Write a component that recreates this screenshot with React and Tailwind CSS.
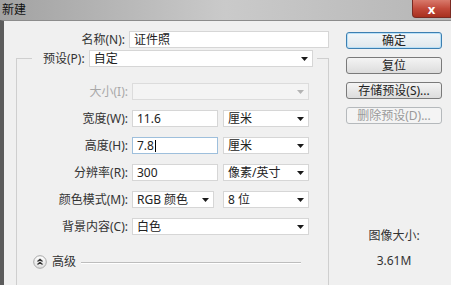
import React from 'react';

const Arrow = ({ color = '#1a1a1a' }) => (
  <svg width="7" height="4" viewBox="0 0 7 4" className="shrink-0">
    <polygon points="0,0 7,0 3.5,4" fill={color} />
  </svg>
);

const Input = ({ w, value, focus, caret }) => (
  <div
    className={`flex h-[17px] items-center border bg-white pl-[4px] text-[12px] leading-[14px] text-[#222] ${
      focus ? 'border-[#9ebfdc]' : 'border-[#d6d6d6]'
    }`}
    style={{ width: w }}
  >
    <span>{value}</span>
    {caret && <span className="ml-[1px] h-[12px] w-[1px] bg-black" />}
  </div>
);

const Select = ({ w, value, disabled }) => (
  <div
    className={`flex h-[17px] items-center justify-between border pl-[4px] pr-[4px] text-[12px] leading-[14px] ${
      disabled ? 'border-[#dcdcdc] bg-[#f4f4f4] text-[#9a9a9a]' : 'border-[#d6d6d6] bg-white text-[#222]'
    }`}
    style={{ width: w }}
  >
    <span>{value}</span>
    <Arrow color={disabled ? '#b4b4b4' : '#1a1a1a'} />
  </div>
);

const Row = ({ label, dim, children }) => (
  <div className="flex h-[17px] items-center">
    <span
      className={`w-[111px] text-right text-[12px] leading-[14px] ${dim ? 'text-[#a8a8a8]' : 'text-[#333]'}`}
    >
      {label}
    </span>
    <div className="ml-[4px] flex gap-[5px]">{children}</div>
  </div>
);

const Btn = ({ children, primary, disabled }) => (
  <div
    className={`flex h-[17px] w-[96px] items-center justify-center rounded-[3px] border text-[12px] leading-[14px] ${
      primary
        ? 'border-[#3c7fb1] bg-gradient-to-b from-[#f2f7fa] to-[#dfe7ec] text-[#222] shadow-[inset_0_0_0_1px_#b9e0f7]'
        : disabled
        ? 'border-[#b5b9bc] bg-[#f4f4f4] text-[#9a9a9a]'
        : 'border-[#7a7a7a] bg-gradient-to-b from-[#f4f4f4] to-[#dcdcdc] text-[#222]'
    }`}
  >
    {children}
  </div>
);

export default function App() {
  return (
    <div className="flex h-[285px] w-[451px] flex-col overflow-hidden bg-[#f0f0f0] font-['Noto_Sans','Noto_Sans_CJK_SC',sans-serif]">
      {/* title bar */}
      <div className="flex h-[20px] shrink-0 justify-between bg-gradient-to-r from-[#a2a2a2] via-[#cacaca] to-[#b6b6b6]">
        <span className="pl-[2px] pt-[3px] text-[12px] leading-[14px] text-[#111]">新建</span>
        <div className="flex h-[18px] w-[39px] items-center justify-center rounded-bl-[4px] border border-t-0 border-[#7a2a22] bg-gradient-to-b from-[#d8796b] via-[#c24a3b] to-[#a8301f] text-[13px] font-bold leading-[14px] text-white">
          x
        </div>
      </div>

      {/* body */}
      <div className="flex flex-1 border-l-[4px] border-t border-[#5c5c5c] border-t-[#8c8c8c]">
        <div className="w-[325px] shrink-0">
          <div className="mt-[10px] flex h-[17px] items-center">
            <span className="w-[124px] text-right text-[12px] leading-[14px] text-[#333]">名称(N):</span>
            <div className="ml-[4px]">
              <Input w="200px" value="证件照" />
            </div>
          </div>

          <fieldset className="ml-[12px] mt-[2px] h-[260px] w-[313px] border border-[#cfcfcf] p-0">
            <legend className="ml-[15px] flex items-center pl-[11px] pr-[4px]">
              <span className="text-[12px] leading-[14px] text-[#333]">预设(P):</span>
              <div className="ml-[4px]">
                <Select w="224px" value="自定" />
              </div>
            </legend>

            <div className="mt-[16px] flex flex-col gap-[10px]">
              <Row label="大小(I):" dim>
                <Select w="177px" value="" disabled />
              </Row>
              <Row label="宽度(W):">
                <Input w="86px" value="11.6" />
                <Select w="86px" value="厘米" />
              </Row>
              <Row label="高度(H):">
                <Input w="86px" value="7.8" focus caret />
                <Select w="86px" value="厘米" />
              </Row>
              <Row label="分辨率(R):">
                <Input w="86px" value="300" />
                <Select w="86px" value="像素/英寸" />
              </Row>
              <Row label="颜色模式(M):">
                <Select w="82px" value="RGB 颜色" />
                <div className="ml-[4px]">
                  <Select w="86px" value="8 位" />
                </div>
              </Row>
              <Row label="背景内容(C):">
                <Select w="177px" value="白色" />
              </Row>
            </div>

            <div className="ml-[16px] mt-[20px] flex items-center">
              <svg width="14" height="14" viewBox="0 0 14 14">
                <defs>
                  <linearGradient id="adv" x1="0" y1="0" x2="0" y2="1">
                    <stop offset="0" stopColor="#ffffff" />
                    <stop offset="1" stopColor="#dedede" />
                  </linearGradient>
                </defs>
                <circle cx="7" cy="7" r="6.3" fill="url(#adv)" stroke="#a8a8a8" strokeWidth="1" />
                <polyline points="4.5,6.5 7,4.3 9.5,6.5" fill="none" stroke="#333" strokeWidth="1.3" />
                <polyline points="4.5,9.5 7,7.3 9.5,9.5" fill="none" stroke="#333" strokeWidth="1.3" />
              </svg>
              <span className="ml-[5px] text-[12px] leading-[14px] text-[#333]">高级</span>
              <div className="ml-[5px] mt-[2px] h-[2px] w-[220px] shrink-0 border-b border-t border-b-white border-t-[#bdbdbd]" />
            </div>
          </fieldset>
        </div>

        {/* buttons */}
        <div className="ml-[17px] flex w-[96px] shrink-0 flex-col pt-[11px]">
          <div className="flex flex-col gap-[8px]">
            <Btn primary>确定</Btn>
            <Btn>复位</Btn>
            <Btn>存储预设(S)...</Btn>
            <Btn disabled>删除预设(D)...</Btn>
          </div>
          <div className="mt-[105px] flex flex-col items-center gap-[11px] text-[12px] leading-[14px] text-[#333]">
            <span>图像大小:</span>
            <span>3.61M</span>
          </div>
        </div>
      </div>
    </div>
  );
}
